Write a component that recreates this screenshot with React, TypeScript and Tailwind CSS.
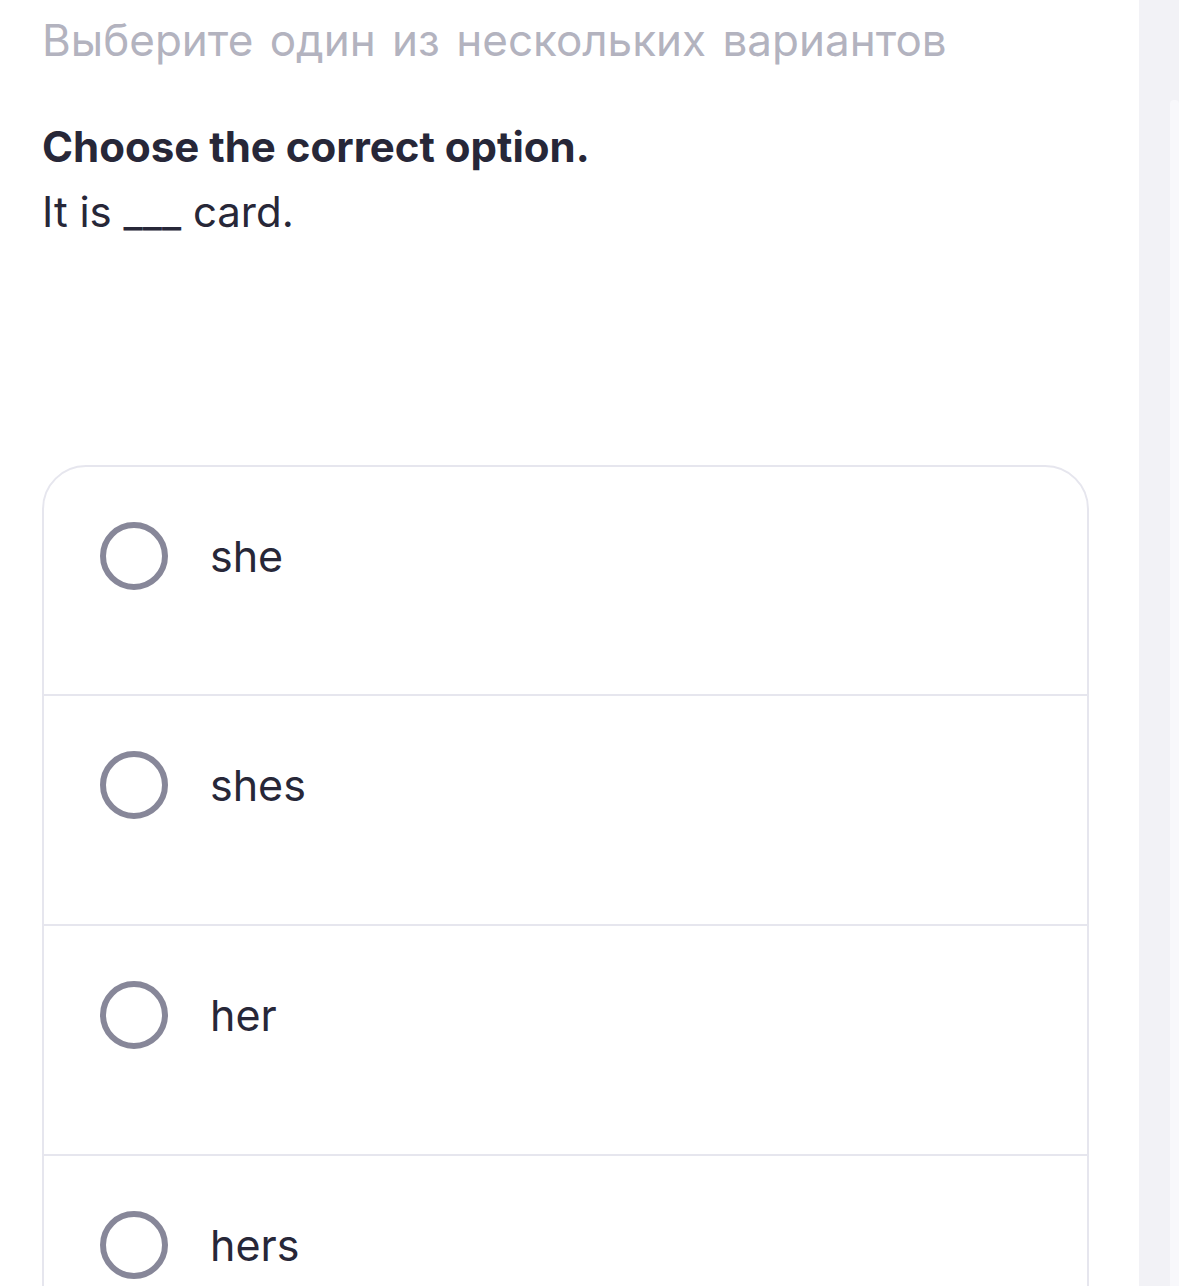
const options = ['she', 'shes', 'her', 'hers']

function Radio() {
  return <span className="h-[68px] w-[68px] shrink-0 rounded-full border-[6px] border-[#878799]" />
}

export default function App() {
  return (
    <div className="flex min-h-[1286px] bg-white font-['Inter','Liberation_Sans',sans-serif] text-[#272738]">
      <main className="flex-1 pl-[42px] pr-[50px]">
        <h1 className="pt-[17px] text-[44px] leading-[46px] text-[#b3b3bf] [word-spacing:4px]">
          Выберите один из нескольких вариантов
        </h1>
        <h2 className="mt-[60px] text-[42px] font-bold leading-[48px]">Choose the correct option.</h2>
        <p className="mt-[17px] text-[42px] leading-[48px]">It is ___ card.</p>

        <div className="mt-[229px] overflow-hidden rounded-[44px] border-2 border-[#e6e6ee]">
          {options.map((o, i) => (
            <label
              key={o}
              className={`flex cursor-pointer items-start pl-[56px] pt-[55px] ${i > 0 ? 'h-[230px] border-t-2 border-[#e6e6ee]' : 'h-[227px]'}`}
            >
              <div className="flex h-[68px] items-center gap-[42px]">
                <Radio />
                <span className="text-[43px]">{o}</span>
              </div>
            </label>
          ))}
        </div>
      </main>

      {/* side rail */}
      <aside className="w-[40px] shrink-0 bg-[#f2f2f6] pl-[31px] pt-[100px]">
        <div className="h-full rounded-t-sm bg-[#f8f8fb]" />
      </aside>
    </div>
  )
}
